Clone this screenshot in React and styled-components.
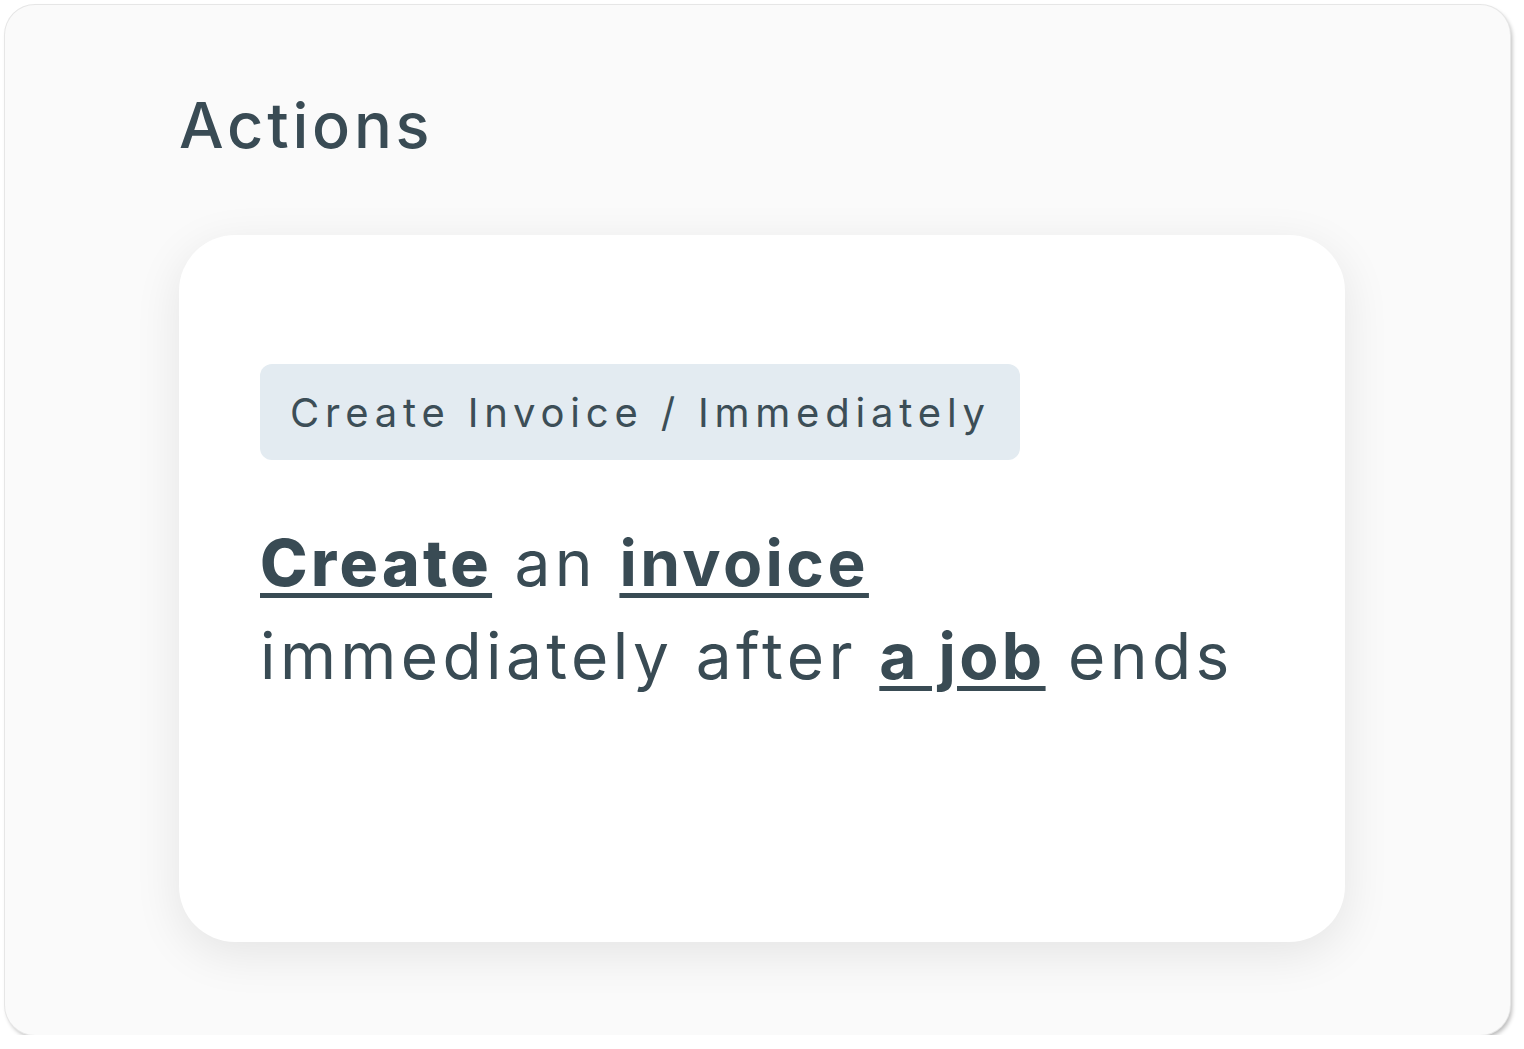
import React from "react";
import styled, { createGlobalStyle } from "styled-components";

const GlobalStyle = createGlobalStyle`
  html, body {
    margin: 0;
    padding: 0;
    background: #ffffff;
  }
  body {
    font-family: Inter, "Noto Sans", sans-serif;
    color: #394b54;
  }
`;

const Panel = styled.div`
  box-sizing: border-box;
  margin: 5px 0 0 5px;
  width: 1505px;
  height: 1030px;
  background: #fafafa;
  border-radius: 30px;
  box-shadow: 0 0 0 1px #e6e6e6, 2px 3px 4px rgba(0, 0, 0, 0.28);
  padding: 82px 0 0 174px;
  display: flex;
  flex-direction: column;
`;

const Title = styled.h2`
  margin: 0;
  font-size: 63px;
  font-weight: 500;
  line-height: 76px;
  letter-spacing: 3.8px;
  color: #394b54;
`;

const Card = styled.div`
  box-sizing: border-box;
  margin-top: 72px;
  width: 1166px;
  height: 707px;
  background: #ffffff;
  border-radius: 56px;
  box-shadow: 0 12px 48px rgba(0, 0, 0, 0.09);
  padding: 129px 0 0 81px;
  display: flex;
  flex-direction: column;
  align-items: flex-start;
`;

const Tag = styled.div`
  box-sizing: border-box;
  height: 96px;
  width: 760px;
  padding: 0 30px;
  display: flex;
  align-items: center;
  background: #e3ebf1;
  border-radius: 12px;
  font-size: 40px;
  font-weight: 400;
  letter-spacing: 5.8px;
  white-space: nowrap;
  color: #3c4e57;
`;

const Sentence = styled.p`
  margin: 56px 0 0;
  font-size: 64px;
  line-height: 93px;
  font-weight: 400;
  letter-spacing: 4.4px;
  color: #394b54;
`;

const Key = styled.span`
  font-weight: ${(p) => (p.$heavy ? 800 : 700)};
  letter-spacing: 3.4px;
  text-decoration: underline;
  text-decoration-thickness: 5px;
  text-underline-offset: 7px;
`;

export default function App() {
  return (
    <>
      <GlobalStyle />
      <Panel>
        <Title>Actions</Title>
        <Card>
          <Tag>Create Invoice / Immediately</Tag>
          <Sentence>
            <Key $heavy>Create</Key> an <Key>invoice</Key>
            <br />
            immediately after <Key>a job</Key> ends
          </Sentence>
        </Card>
      </Panel>
    </>
  );
}
